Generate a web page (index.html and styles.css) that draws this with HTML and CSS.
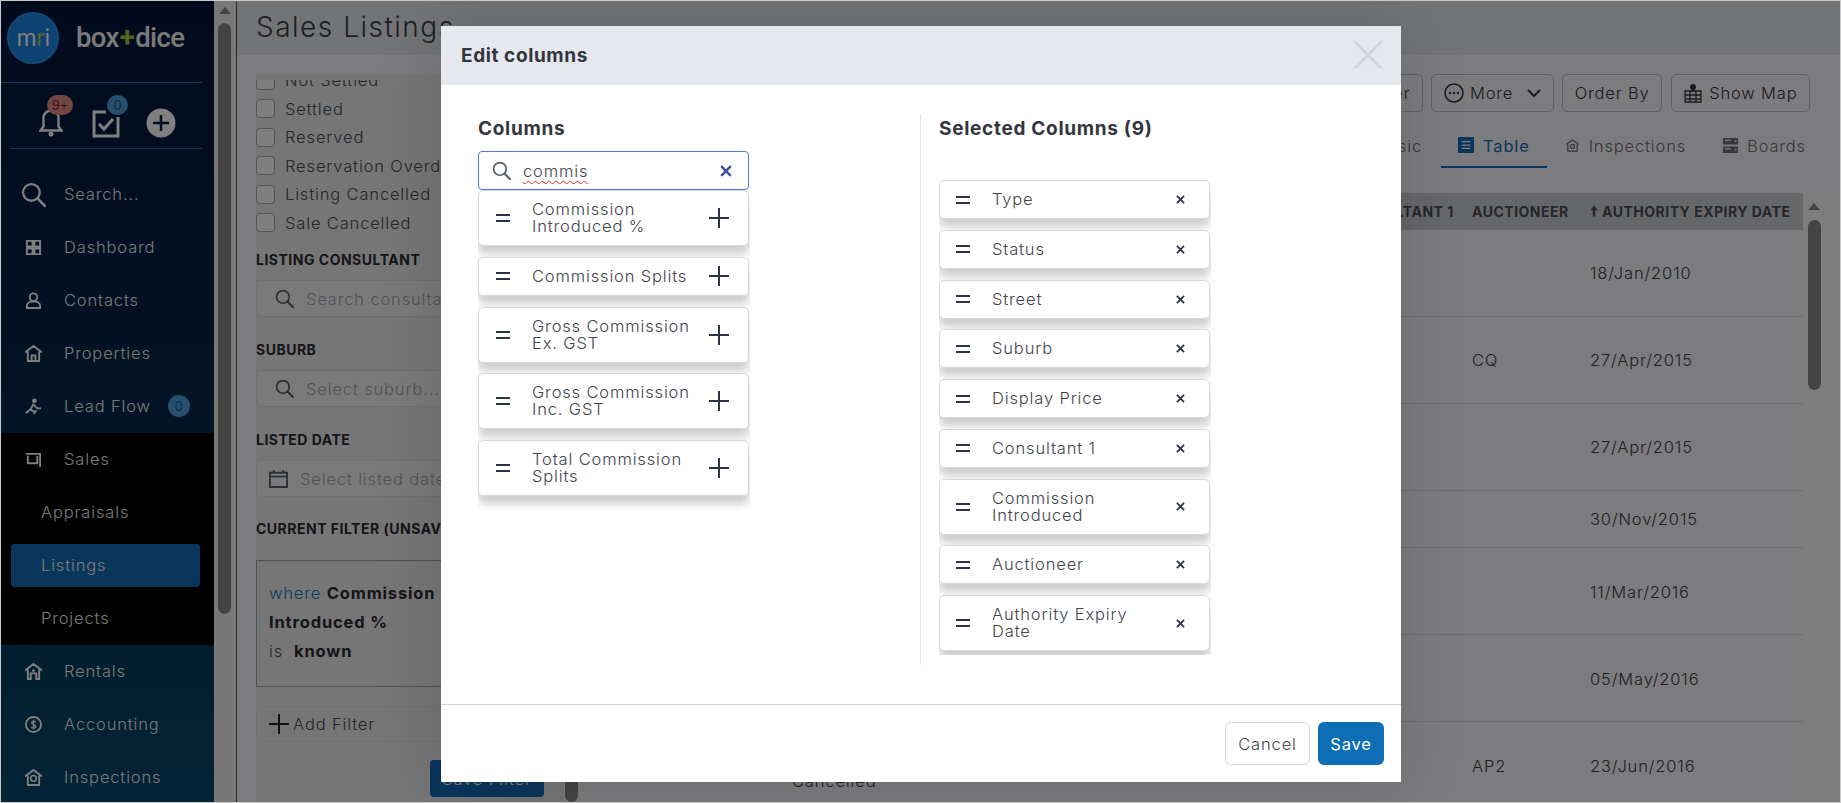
FILE: index.html
```html
<!DOCTYPE html>
<html lang="en">
<head>
<meta charset="utf-8">
<title>Sales Listings</title>
<link rel="stylesheet" href="styles.css">
</head>
<body>
<svg class="defs" width="0" height="0" aria-hidden="true">
  <symbol id="i-search" viewBox="0 0 24 24"><circle cx="10" cy="10" r="8" fill="none" stroke="currentColor" stroke-width="2.2"/><path d="M16 16l7 7" stroke="currentColor" stroke-width="2.6" stroke-linecap="round"/></symbol>
  <symbol id="i-handle" viewBox="0 0 14 8"><path d="M0 1h14M0 7h14" stroke="currentColor" stroke-width="2"/></symbol>
  <symbol id="i-plus" viewBox="0 0 20 20"><path d="M10 0v20M0 10h20" stroke="currentColor" stroke-width="2"/></symbol>
  <symbol id="i-x" viewBox="0 0 10 10"><path d="M1 1l8 8M9 1l-8 8" stroke="currentColor" stroke-width="2"/></symbol>
</svg>
<div class="frame">
  <aside class="sidebar">
    <div class="brand">
      <div class="logo"><span class="logo-m">m</span><span class="logo-r">r</span><span class="logo-i">i</span></div>
      <div class="wordmark">box<span class="wordplus">+</span>dice</div>
    </div>
    <div class="quick">
      <div class="quick-item">
        <svg class="quick-bell" viewBox="0 0 24 28"><path d="M12 2a7.500 7.500 0 0 0-7.500 7.500V18L1.500 22h21L19.500 18V9.500A7.500 7.500 0 0 0 12 2z" fill="none" stroke="#fff" stroke-width="2.400"/><circle cx="12" cy="25.500" r="2.500" fill="#fff"/></svg>
        <span class="badge badge-red">9+</span>
      </div>
      <div class="quick-item">
        <svg class="quick-check" viewBox="0 0 28 30"><path d="M14 4H2v24h24V9" fill="none" stroke="#fff" stroke-width="3"/><path d="M7 16l5 5 9-10" fill="none" stroke="#fff" stroke-width="3"/></svg>
        <span class="badge badge-blue">0</span>
      </div>
      <svg class="quick-plus" viewBox="0 0 30 30"><circle cx="15" cy="15" r="14.500" fill="#fff"/><path d="M15 7v16M7 15h16" stroke="#04163a" stroke-width="2.500"/></svg>
    </div>
    <nav class="nav">
      <div class="nav-row nav-search"><svg class="nav-icon-lg"><use href="#i-search"/></svg><span>Search...</span></div>
      <div class="nav-row"><svg class="nav-icon" viewBox="0 0 18 18"><path d="M2 2h6v6H2zM10 2h6v6h-6zM2 10h6v6H2zM10 10h6v6h-6z" fill="none" stroke="#fff" stroke-width="2"/></svg><span>Dashboard</span></div>
      <div class="nav-row"><svg class="nav-icon" viewBox="0 0 18 18"><circle cx="9" cy="5.500" r="4" fill="none" stroke="#fff" stroke-width="2"/><path d="M2 17v-2a5 5 0 0 1 5-5h4a5 5 0 0 1 5 5v2z" fill="none" stroke="#fff" stroke-width="2"/></svg><span>Contacts</span></div>
      <div class="nav-row"><svg class="nav-icon" viewBox="0 0 18 18"><path d="M0 8l9-7 9 7M3 7v10h12V7M7 17v-6h4v6" fill="none" stroke="#fff" stroke-width="2"/></svg><span>Properties</span></div>
      <div class="nav-row"><svg class="nav-icon" viewBox="0 0 18 18"><circle cx="10" cy="3" r="2.500" fill="#fff"/><path d="M9 6l-3 6-5 4M9 7l4 4 4 0M6 12l5 4M12 13l-3 4" fill="none" stroke="#fff" stroke-width="2"/></svg><span>Lead Flow</span><span class="nav-count">0</span></div>
      <div class="nav-group">
        <div class="nav-row"><svg class="nav-icon" viewBox="0 0 18 18"><path d="M1 3h15v14M3 5v8h10V5" fill="none" stroke="#fff" stroke-width="2"/></svg><span>Sales</span></div>
        <div class="nav-row nav-sub"><span>Appraisals</span></div>
        <div class="nav-row nav-sub nav-active"><span>Listings</span></div>
        <div class="nav-row nav-sub"><span>Projects</span></div>
      </div>
      <div class="nav-row"><svg class="nav-icon" viewBox="0 0 18 18"><path d="M0 8l9-7 9 7M3 7v10h3v-6h6v6h3V7" fill="none" stroke="#fff" stroke-width="2"/><circle cx="9" cy="8" r="1.500" fill="#fff"/></svg><span>Rentals</span></div>
      <div class="nav-row"><svg class="nav-icon" viewBox="0 0 18 18"><circle cx="9" cy="9" r="8" fill="none" stroke="#fff" stroke-width="2"/><path d="M11.500 6.500C11 5.500 7 5 7 7.200S11.500 9 11.500 11.200 7 13 6.500 11.500M9 4v10" fill="none" stroke="#fff" stroke-width="1.400"/></svg><span>Accounting</span></div>
      <div class="nav-row"><svg class="nav-icon" viewBox="0 0 18 18"><path d="M0 8l9-7 9 7M3 7v10h12V7" fill="none" stroke="#fff" stroke-width="2"/><circle cx="9" cy="10" r="3" fill="none" stroke="#fff" stroke-width="1.600"/></svg><span>Inspections</span></div>
    </nav>
  </aside>

  <div class="vscroll vscroll-page">
    <span class="arrow"></span>
    <span class="thumb thumb-page"></span>
  </div>

  <main class="main">
    <header class="page-head"><h1 class="page-title">Sales Listings</h1></header>
    <div class="page-body">
      <section class="filter-panel">
        <div class="filters">
          <div class="status-list">
            <label class="check-row"><span class="check"></span>Not Settled</label>
            <label class="check-row"><span class="check"></span>Settled</label>
            <label class="check-row"><span class="check"></span>Reserved</label>
            <label class="check-row"><span class="check"></span>Reservation Overdue</label>
            <label class="check-row"><span class="check"></span>Listing Cancelled</label>
            <label class="check-row"><span class="check"></span>Sale Cancelled</label>
          </div>
          <h3 class="filter-head head-consultant">LISTING CONSULTANT</h3>
          <div class="filter-input"><svg class="input-icon"><use href="#i-search"/></svg><span>Search consultants...</span></div>
          <h3 class="filter-head">SUBURB</h3>
          <div class="filter-input"><svg class="input-icon"><use href="#i-search"/></svg><span>Select suburb...</span></div>
          <h3 class="filter-head">LISTED DATE</h3>
          <div class="filter-input filter-input-date"><svg class="input-icon" viewBox="0 0 20 20"><path d="M1 4h18v15H1zM1 8h18M5 1v4M15 1v4" fill="none" stroke="currentColor" stroke-width="2"/></svg><span>Select listed date...</span></div>
          <h3 class="filter-head head-current">CURRENT FILTER (UNSAVED)</h3>
          <div class="filter-box">
            <p class="filter-line"><span class="where">where</span> <b>Commission Introduced %</b></p>
            <p class="filter-line"><span class="is">is</span>&nbsp; <b>known</b></p>
          </div>
          <div class="add-filter"><svg class="add-plus"><use href="#i-plus"/></svg>Add Filter</div>
          <div class="save-row"><div class="save-filter">Save Filter</div></div>
        </div>
      </section>

      <div class="vscroll vscroll-filter"><span class="thumb thumb-filter"></span></div>

      <section class="results">
        <div class="toolbar">
          <div class="tool-btn">Filter</div>
          <div class="tool-btn"><svg class="tool-icon" viewBox="0 0 20 20"><circle cx="10" cy="10" r="9" fill="none" stroke="currentColor" stroke-width="1.500"/><circle cx="6" cy="10" r="1.200" fill="currentColor"/><circle cx="10" cy="10" r="1.200" fill="currentColor"/><circle cx="14" cy="10" r="1.200" fill="currentColor"/></svg>More<svg class="tool-caret" viewBox="0 0 14 10"><path d="M1 2l6 6 6-6" fill="none" stroke="currentColor" stroke-width="2"/></svg></div>
          <div class="tool-btn">Order By</div>
          <div class="tool-btn"><svg class="tool-icon" viewBox="0 0 20 20"><path d="M2 8h16v11H2zM2 12h16M2 16h16M7 8v11M13 8v11" fill="none" stroke="currentColor" stroke-width="1.300"/><path d="M10 1a3 3 0 0 1 3 3c0 2-3 5-3 5S7 6 7 4a3 3 0 0 1 3-3z" fill="currentColor"/></svg>Show Map</div>
        </div>
        <div class="tabs">
          <div class="tab">Basic</div>
          <div class="tab tab-active"><svg class="tab-icon" viewBox="0 0 18 18"><rect width="17" height="17" rx="1" fill="currentColor"/><path d="M4 5h9M4 8.500h9M4 12h9" stroke="#fff" stroke-width="1.300"/></svg>Table</div>
          <div class="tab"><svg class="tab-icon-sm" viewBox="0 0 14 14"><path d="M0 6l7-5 7 5M2 6v7h10V6" fill="none" stroke="currentColor" stroke-width="1.300"/><circle cx="7" cy="8" r="2.200" fill="none" stroke="currentColor" stroke-width="1.200"/></svg>Inspections</div>
          <div class="tab"><svg class="tab-icon" viewBox="0 0 18 18"><path d="M1 1h16v7H1zM1 10h16v7H1z" fill="currentColor"/><path d="M3 3.500h6M3 12.500h6" stroke="#fff" stroke-width="1.300"/><circle cx="14.500" cy="4.500" r="1" fill="#fff"/><circle cx="14.500" cy="13.500" r="1" fill="#fff"/></svg>Boards</div>
        </div>
        <div class="table-wrap">
          <div class="table">
            <div class="t-row t-head">
              <span>TYPE</span><span>STATUS</span><span>STREET</span><span>SUBURB</span><span>DISPLAY PRICE</span><span>CONSULTANT 1</span><span>AUCTIONEER</span>
              <span class="t-sort"><svg class="sort-icon" viewBox="0 0 10 14"><path d="M5 0l4.500 6H6.500v8h-3V6H.500z" fill="currentColor"/></svg>AUTHORITY EXPIRY DATE</span>
            </div>
            <div class="t-row"><span></span><span></span><span></span><span></span><span></span><span></span><span></span><span>18/Jan/2010</span></div>
            <div class="t-row"><span></span><span></span><span></span><span></span><span></span><span></span><span>CQ</span><span>27/Apr/2015</span></div>
            <div class="t-row"><span></span><span></span><span></span><span></span><span></span><span></span><span></span><span>27/Apr/2015</span></div>
            <div class="t-row t-row-short"><span></span><span></span><span></span><span></span><span></span><span></span><span></span><span>30/Nov/2015</span></div>
            <div class="t-row"><span></span><span></span><span></span><span></span><span></span><span></span><span></span><span>11/Mar/2016</span></div>
            <div class="t-row"><span></span><span></span><span></span><span></span><span></span><span></span><span></span><span>05/May/2016</span></div>
            <div class="t-row"><span></span><span></span><span class="t-status">Cancelled</span><span></span><span></span><span></span><span>AP2</span><span>23/Jun/2016</span></div>
          </div>
          <div class="vscroll vscroll-table">
            <span class="arrow"></span>
            <span class="thumb thumb-table"></span>
          </div>
        </div>
      </section>
    </div>
  </main>

  <div class="overlay">
    <div class="modal">
      <header class="modal-head">
        <h2 class="modal-title">Edit columns</h2>
        <svg class="modal-close" viewBox="0 0 30 30"><path d="M1.500 1.500l27 27M28.500 1.500l-27 27" stroke="currentColor" stroke-width="3"/></svg>
      </header>
      <div class="modal-body">
        <div class="col-left">
          <h3 class="col-title">Columns</h3>
          <div class="col-search">
            <svg class="col-search-icon"><use href="#i-search"/></svg>
            <span class="col-search-text">commis</span>
            <svg class="col-search-clear"><use href="#i-x"/></svg>
          </div>
          <div class="col-list col-list-left">
            <div class="col-item"><svg class="handle"><use href="#i-handle"/></svg><span class="col-name">Commission Introduced %</span><svg class="add"><use href="#i-plus"/></svg></div>
            <div class="col-item"><svg class="handle"><use href="#i-handle"/></svg><span class="col-name">Commission Splits</span><svg class="add"><use href="#i-plus"/></svg></div>
            <div class="col-item"><svg class="handle"><use href="#i-handle"/></svg><span class="col-name">Gross Commission Ex. GST</span><svg class="add"><use href="#i-plus"/></svg></div>
            <div class="col-item"><svg class="handle"><use href="#i-handle"/></svg><span class="col-name">Gross Commission Inc. GST</span><svg class="add"><use href="#i-plus"/></svg></div>
            <div class="col-item"><svg class="handle"><use href="#i-handle"/></svg><span class="col-name">Total Commission Splits</span><svg class="add"><use href="#i-plus"/></svg></div>
          </div>
        </div>
        <div class="col-right">
          <h3 class="col-title">Selected Columns (9)</h3>
          <div class="col-list col-list-right">
            <div class="col-item"><svg class="handle"><use href="#i-handle"/></svg><span class="col-name">Type</span><svg class="remove"><use href="#i-x"/></svg></div>
            <div class="col-item"><svg class="handle"><use href="#i-handle"/></svg><span class="col-name">Status</span><svg class="remove"><use href="#i-x"/></svg></div>
            <div class="col-item"><svg class="handle"><use href="#i-handle"/></svg><span class="col-name">Street</span><svg class="remove"><use href="#i-x"/></svg></div>
            <div class="col-item"><svg class="handle"><use href="#i-handle"/></svg><span class="col-name">Suburb</span><svg class="remove"><use href="#i-x"/></svg></div>
            <div class="col-item"><svg class="handle"><use href="#i-handle"/></svg><span class="col-name">Display Price</span><svg class="remove"><use href="#i-x"/></svg></div>
            <div class="col-item"><svg class="handle"><use href="#i-handle"/></svg><span class="col-name">Consultant 1</span><svg class="remove"><use href="#i-x"/></svg></div>
            <div class="col-item"><svg class="handle"><use href="#i-handle"/></svg><span class="col-name">Commission Introduced</span><svg class="remove"><use href="#i-x"/></svg></div>
            <div class="col-item"><svg class="handle"><use href="#i-handle"/></svg><span class="col-name">Auctioneer</span><svg class="remove"><use href="#i-x"/></svg></div>
            <div class="col-item"><svg class="handle"><use href="#i-handle"/></svg><span class="col-name">Authority Expiry Date</span><svg class="remove"><use href="#i-x"/></svg></div>
          </div>
        </div>
      </div>
      <footer class="modal-foot">
        <div class="btn btn-cancel">Cancel</div>
        <div class="btn btn-save">Save</div>
      </footer>
    </div>
  </div>
</div>
</body>
</html>
```

FILE: styles.css
```css
* { box-sizing: border-box; }
html, body { margin: 0; height: 100%; overflow: hidden; }
body {
  font-family: "Inter", "Open Sans", sans-serif;
  font-size: 16.500px;
  font-weight: 400;
  letter-spacing: .85px;
  color: #4a4e56;
  background: #fff;
}
h1, h2, h3, p { margin: 0; }
.defs { position: absolute; }

.frame {
  position: relative;
  display: flex;
  width: 100vw;
  height: 100vh;
  border: 1px solid #c9c9c9;
  overflow: hidden;
}

/* sidebar */
.sidebar {
  flex: 0 0 213px;
  background: linear-gradient(180deg, #04163a 0%, #04284a 50%, #04486c 100%);
  color: #fff;
  overflow: hidden;
}
.brand {
  display: flex;
  align-items: center;
  gap: 17px;
  height: 82px;
  padding: 0 0 8px 6px;
  margin: 0 12px 0 0;
  border-bottom: 1px solid #1470b8;
}
.logo {
  flex: 0 0 52px;
  height: 52px;
  border-radius: 50%;
  background: #1c84e6;
  border: 2px solid #2a90e8;
  display: flex;
  align-items: center;
  justify-content: center;
  font-size: 23px;
  letter-spacing: -.5px;
  font-weight: 400;
}
.logo-r { color: #a6cf4a; }
.wordmark {
  font-family: "Roboto", sans-serif;
  font-weight: 500;
  font-size: 27.500px;
  letter-spacing: -.6px;
  color: #f4f4f4;
}
.wordplus { color: #9ecb3c; font-weight: 700; margin: 0 1px; }
.quick {
  position: relative;
  display: flex;
  align-items: center;
  height: 66px;
  margin: 0 12px 0 9px;
  padding-left: 29px;
  border-bottom: 1px solid #1470b8;
}
.quick-item { position: relative; display: flex; }
.quick-bell { width: 24px; height: 29px; margin-top: 14px; margin-right: 29px; }
.quick-check { width: 28px; height: 30px; margin-top: 14px; margin-right: 26px; }
.quick-plus { width: 30px; height: 30px; margin-top: 14px; }
.badge {
  position: absolute;
  top: 1px;
  height: 20px;
  border-radius: 10px;
  font-size: 13px;
  letter-spacing: 0;
  display: flex;
  align-items: center;
  justify-content: center;
  color: #f4f4f4;
}
.badge-red { left: 8px; width: 26px; background: #e88a86; color: #6a3030; }
.badge-blue { left: 15px; width: 21px; background: #4d9fe0; color: #1a4a70; }

.nav { padding-top: 18.500px; }
.nav-row {
  display: flex;
  align-items: center;
  height: 53px;
  padding-left: 63px;
  position: relative;
  font-weight: 300;
  color: #f0f0f2;
}
.nav-icon { position: absolute; left: 24px; top: 18px; width: 17px; height: 17px; }
.nav-icon-lg { position: absolute; left: 20px; top: 14px; width: 25px; height: 25px; color: #fff; }
.nav-count {
  margin-left: 17px;
  width: 22px;
  height: 22px;
  border-radius: 50%;
  background: #4d9fe0;
  color: #1a4a70;
  font-size: 13px;
  display: flex;
  align-items: center;
  justify-content: center;
  letter-spacing: 0;
}
.nav-group { background: #000; }
.nav-sub { padding-left: 40px; }
.nav-active::before {
  content: "";
  position: absolute;
  left: 10px;
  top: 5px;
  width: 189px;
  height: 43px;
  background: #146cb8;
  border-radius: 4px;
}
.nav-active span { position: relative; }

/* scrollbars */
.vscroll {
  display: flex;
  flex-direction: column;
  align-items: center;
  background: #f1f1f1;
}
.thumb { display: block; width: 13px; border-radius: 7px; background: #888; }
.arrow {
  display: block;
  width: 0;
  height: 0;
  border-left: 6px solid transparent;
  border-right: 6px solid transparent;
  border-bottom: 7px solid #888;
}
.vscroll-page { flex: 0 0 23px; padding: 6px 1px 0 0; border-right: 1px solid #555; }
.vscroll-page .arrow { margin-bottom: 9px; }
.thumb-page { height: 591px; }

/* main */
.main {
  flex: 1;
  min-width: 0;
  display: flex;
  flex-direction: column;
  background: #fff;
}
.page-head {
  flex: 0 0 54px;
  background: #e6e8ec;
  padding: 7px 0 0 19px;
}
.page-title { font-size: 28px; font-weight: 300; letter-spacing: 1.500px; line-height: 38px; color: #3c4049; }
.page-body { flex: 1; min-height: 0; display: flex; padding-top: 19px; background: #f8f8fc; }

/* filters */
.filter-panel {
  flex: 0 0 308px;
  margin-left: 19px;
  padding-top: 6px;
  background: #ececec;
}
.filters {
  width: 288px;
  height: 100%;
  overflow: hidden;
  font-weight: 300;
  white-space: nowrap;
}
.status-list { margin-top: -14px; }
.check-row { display: flex; align-items: center; height: 28.500px; gap: 10px; }
.check { width: 19px; height: 19px; border: 1px solid #a4a8b0; border-radius: 4px; background: #fff; }
.filter-head {
  font-size: 14px;
  font-weight: 700;
  line-height: 20px;
  letter-spacing: .5px;
  color: #2a2d33;
  margin-top: 23px;
}
.head-consultant { margin-top: 13px; }
.head-current { margin-top: 22px; }
.filter-input {
  display: flex;
  align-items: center;
  gap: 12px;
  height: 37px;
  margin-top: 10px;
  padding-left: 18px;
  width: 288px;
  overflow: hidden;
  border: 1px solid #dfe1e6;
  border-radius: 5px;
  background: #f5f5f6;
  color: #a4a6ac;
}
.filter-input-date { padding-left: 12px; }
.input-icon { flex: 0 0 19px; width: 19px; height: 19px; color: #5a606c; }
.filter-box {
  height: 127px;
  margin-top: 21px;
  padding: 18px 12px;
  border: 1px solid #9aa2b4;
  white-space: normal;
  line-height: 29px;
}
.filter-line { max-width: 200px; }
.filter-box b { font-weight: 700; color: #2a2d33; }
.where { color: #2878c0; }
.add-filter {
  display: flex;
  align-items: center;
  gap: 4px;
  height: 36px;
  margin-top: 19px;
  padding-left: 12px;
  border: 1px solid #dfe1e6;
  border-radius: 5px;
}
.add-plus { width: 20px; height: 20px; color: #222; }
.save-row { display: flex; justify-content: flex-end; margin-top: 18px; }
.save-filter {
  width: 114px;
  height: 37px;
  background: #146cb8;
  border-radius: 4px;
  color: #fff;
  display: flex;
  align-items: center;
  justify-content: center;
}
.vscroll-filter { flex: 0 0 15px; margin-top: -19px; justify-content: flex-end; background: none; }
.thumb-filter { height: 40px; }

/* results */
.results {
  flex: 1;
  min-width: 0;
  margin-left: 33px;
  padding-right: 15px;
  font-weight: 300;
  white-space: nowrap;
}
.toolbar { display: flex; justify-content: flex-end; gap: 8.500px; padding-right: 15px; }
.tool-btn {
  display: flex;
  align-items: center;
  gap: 6px;
  height: 37.500px;
  padding: 0 11.500px;
  border: 1px solid #bfc2c8;
  border-radius: 5px;
  color: #33363c;
}
.tool-icon { width: 20px; height: 20px; }
.tool-caret { width: 14px; height: 10px; margin-left: 8px; }
.tabs { display: flex; justify-content: flex-end; gap: 2px; height: 45px; margin-top: 11px; padding-right: 2px; }
.tab {
  display: flex;
  align-items: center;
  gap: 8px;
  padding: 3px 17px 0;
  color: #6a6e76;
  border-bottom: 2px solid transparent;
}
.tab-active { color: #146cb8; border-bottom-color: #146cb8; font-weight: 400; }
.tab-icon { width: 17px; height: 17px; }
.tab-icon-sm { width: 13px; height: 13px; margin-right: 2px; }
.table-wrap { display: flex; margin-top: 25px; }
.table { flex: 1; min-width: 0; }
.t-row {
  display: grid;
  grid-template-columns: 70px 110px 230px 160px 160px 130px 118px 213px;
  align-items: center;
  height: 87px;
  padding-top: 1px;
  border-bottom: 1px solid #d8d8dc;
  color: #3e424a;
}
.t-row-short { height: 57.500px; }
.t-head {
  height: 37px;
  padding-top: 0;
  background: #cdced2;
  border-bottom: none;
  font-size: 14px;
  font-weight: 700;
  letter-spacing: .5px;
  color: #4c4e56;
}
.t-sort { display: flex; align-items: center; gap: 4px; }
.sort-icon { width: 8px; height: 12px; }
.t-status { padding-top: 30px; }
.vscroll-table { flex: 0 0 22px; background: #fafafa; padding-top: 10px; height: 620px; }
.vscroll-table .arrow { margin-bottom: 10px; }
.thumb-table { height: 170px; }

/* modal */
.overlay {
  position: absolute;
  inset: 0;
  background: rgba(0, 0, 0, .5);
}
.modal {
  position: absolute;
  left: 440px;
  top: 25px;
  width: 960px;
  height: 756px;
  display: flex;
  flex-direction: column;
  background: #fff;
  color: #40444c;
  font-weight: 300;
  box-shadow: 0 0 60px rgba(0, 0, 0, .15);
}
.modal-head {
  flex: 0 0 59px;
  display: flex;
  align-items: center;
  justify-content: space-between;
  padding: 0 18px 0 20px;
  background: #e5e8ed;
}
.modal-title { font-size: 19px; font-weight: 700; letter-spacing: .6px; color: #33363e; }
.modal-close { width: 30px; height: 30px; margin-top: -2px; color: #d3d6dc; }
.modal-body {
  flex: 1;
  min-height: 0;
  display: grid;
  grid-template-columns: 479px 1fr;
  padding-top: 29px;
}
.col-left { padding-left: 37px; }
.col-right {
  height: 551px;
  padding-left: 18px;
  border-left: 1px solid #e4e7ec;
}
.col-title { font-size: 19px; font-weight: 700; letter-spacing: .7px; line-height: 28px; color: #33363e; padding-top: 1px; height: 28px; }
.col-search {
  display: flex;
  align-items: center;
  width: 271px;
  height: 39px;
  margin-top: 9px;
  padding: 0 14px 0 13px;
  border: 1.500px solid #5676e0;
  border-radius: 4px;
}
.col-search-icon { flex: 0 0 19px; width: 19px; height: 19px; color: #5a606c; }
.col-search-text {
  flex: 1;
  margin-left: 12px;
  text-decoration: underline wavy #e8312f 1px;
  text-underline-offset: 3px;
}
.col-search-clear { width: 12px; height: 12px; color: #3d50a0; margin-right: 2px; }
.col-list { width: 272px; overflow: hidden; }
.col-list-left { padding-bottom: 15px; }
.col-list-right { height: 475px; margin-top: 38px; }
.col-item {
  display: flex;
  align-items: center;
  width: 271px;
  min-height: 39px;
  margin-bottom: 10.750px;
  padding: 10px 10px 10px 17px;
  border: 1px solid #d6d8dd;
  border-radius: 5px;
  background: #fff;
  box-shadow: 0 8px 10px rgba(0, 0, 0, .2);
  line-height: 17px;
}
.col-item:last-child { margin-bottom: 0; }
.col-list-right .col-item { padding-left: 16px; }
.handle { flex: 0 0 14px; width: 14px; height: 8px; color: #2c3345; }
.col-name { flex: 1; margin-left: 22px; }
.add { flex: 0 0 20px; width: 20px; height: 20px; margin: -2px 9px -2px 14px; color: #2c3345; }
.remove { flex: 0 0 9px; width: 9px; height: 9px; margin-right: 14px; color: #2c3345; margin-left: 14px; }
.modal-foot {
  flex: 0 0 78px;
  display: flex;
  justify-content: flex-end;
  gap: 8px;
  padding: 17px 17px 0 0;
  border-top: 1px solid #cfd4dc;
}
.btn {
  display: flex;
  align-items: center;
  justify-content: center;
  height: 43px;
  border-radius: 6px;
}
.btn-cancel { width: 85px; border: 1px solid #d6d8dd; }
.btn-save { width: 66px; background: #0e6eb5; color: #fff; font-weight: 400; }
```
